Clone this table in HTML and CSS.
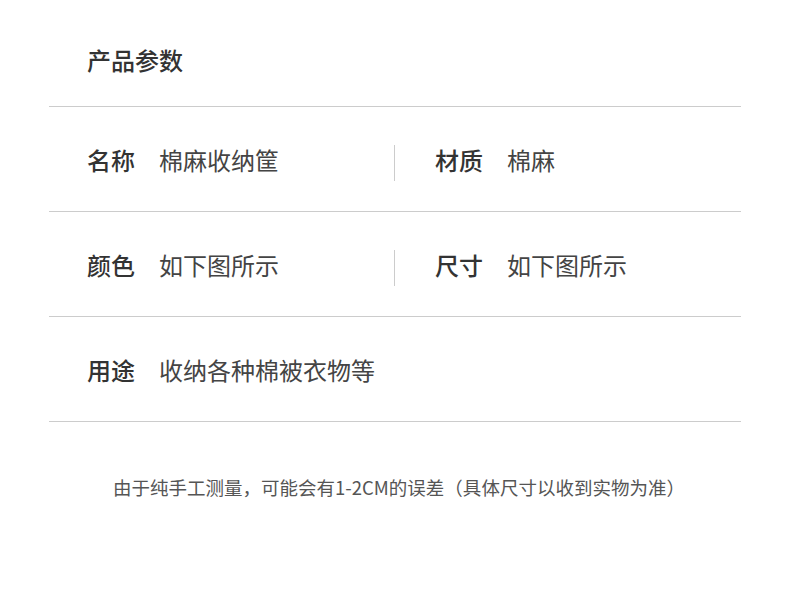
FILE: index.html
```html
<!DOCTYPE html>
<html>
<head>
    <meta charset="utf-8">
    <title>产品参数</title>
    <link rel="stylesheet" href="styles.css">
</head>
<body>
    <div class="params">
        <h1 class="params-title">产品参数</h1>

        <div class="row">
            <div class="cell">
                <span class="label">名称</span>
                <span class="value">棉麻收纳筐</span>
            </div>
            <div class="divider"></div>
            <div class="cell cell-right">
                <span class="label">材质</span>
                <span class="value">棉麻</span>
            </div>
        </div>

        <div class="row">
            <div class="cell">
                <span class="label">颜色</span>
                <span class="value">如下图所示</span>
            </div>
            <div class="divider"></div>
            <div class="cell cell-right">
                <span class="label">尺寸</span>
                <span class="value">如下图所示</span>
            </div>
        </div>

        <div class="row">
            <div class="cell">
                <span class="label">用途</span>
                <span class="value">收纳各种棉被衣物等</span>
            </div>
        </div>

        <p class="note">由于纯手工测量，可能会有1-2CM的误差（具体尺寸以收到实物为准）</p>
    </div>
</body>
</html>
```

FILE: styles.css
```css
body {
    margin: 0;
    background: #fff;
    font-family: "Noto Sans CJK SC", "Noto Sans", sans-serif;
    color: #333;
}
.params {
    margin: 0 49px;
}
.params-title {
    margin: 0;
    height: 107px;
    padding: 12px 0 0 38px;
    box-sizing: border-box;
    display: flex;
    align-items: center;
    font-size: 24px;
    font-weight: 500;
    color: #333;
    border-bottom: 1px solid #ccc;
}
.row {
    height: 105px;
    display: flex;
    align-items: center;
    border-bottom: 1px solid #ccc;
    box-sizing: border-box;
}
.cell {
    width: 345px;
    padding-left: 38px;
    box-sizing: border-box;
    display: flex;
    align-items: center;
    gap: 24px;
    font-size: 24px;
}
.cell-right {
    padding-left: 40px;
}
.divider {
    width: 1px;
    height: 36px;
    margin-top: 8px;
    background: #ccc;
}
.label {
    font-weight: 500;
    color: #333;
}
.value {
    color: #444;
}
.note {
    margin: 52px 0 0;
    padding-left: 8px;
    text-align: center;
    font-size: 18.5px;
    color: #555;
}
```
